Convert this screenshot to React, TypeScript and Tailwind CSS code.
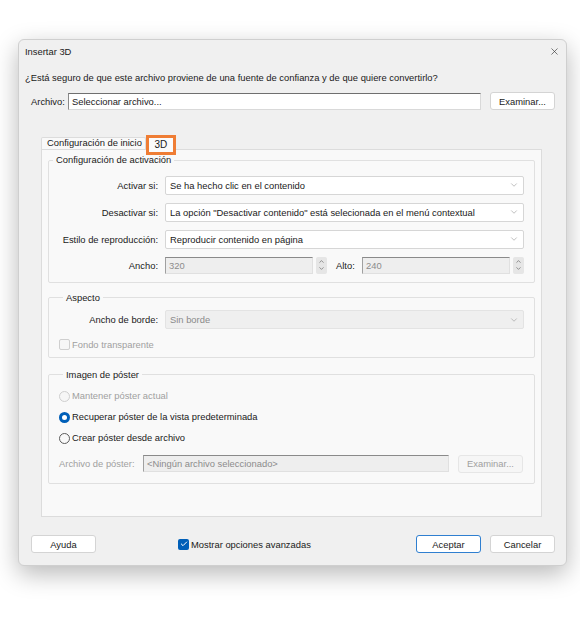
import { ChevronDown, ChevronUp, X, Check } from "lucide-react";

const font = { fontFamily: '"Liberation Sans", Arial, sans-serif' };

function Select({ value, disabled }: { value: string; disabled?: boolean }) {
  return (
    <div
      className={
        "flex h-[19px] flex-1 items-center justify-between rounded-[2px] border pl-[4px] pr-[4px] " +
        (disabled ? "border-[#e3e3e3] bg-[#efefef] text-[#8a8a8a]" : "border-[#d6d6d6] bg-white text-[#1a1a1a]")
      }
    >
      <span>{value}</span>
      <ChevronDown className="h-[10px] w-[10px] text-[#9a9a9a]" strokeWidth={1.5} />
    </div>
  );
}

function Spinner() {
  return (
    <div className="flex h-[17px] w-[11px] flex-col items-center justify-center rounded-[2px] bg-[#e6e6e6] text-[#555]">
      <ChevronUp className="h-[7px] w-[7px]" strokeWidth={2} />
      <ChevronDown className="h-[7px] w-[7px]" strokeWidth={2} />
    </div>
  );
}

function NumberField({ value }: { value: string }) {
  return (
    <div className="flex items-center gap-[3px]">
      <div className="flex h-[17px] w-[148px] items-center border border-[#e0e0e0] border-t-[#8a8a8a] border-l-[#a0a0a0] bg-[#eeeeee] pl-[3px] text-[#8c8c8c]">
        {value}
      </div>
      <Spinner />
    </div>
  );
}

function Row({ label, children }: { label: string; children: React.ReactNode }) {
  return (
    <div className="flex items-center">
      <div className="w-[116px] pr-[7px] text-right text-[#1a1a1a]">{label}</div>
      {children}
    </div>
  );
}

function Radio({ label, state }: { label: string; state: "off" | "on" | "disabled" }) {
  return (
    <div className="flex items-center gap-[2px]">
      {state === "on" ? (
        <span className="flex h-[11px] w-[11px] items-center justify-center rounded-full bg-[#005fb8]">
          <span className="h-[5px] w-[5px] rounded-full bg-white" />
        </span>
      ) : (
        <span
          className={
            "h-[11px] w-[11px] rounded-full border " +
            (state === "disabled" ? "border-[#cfcfcf] bg-[#f6f6f6]" : "border-[#5c5c5c] bg-[#f9f9f9]")
          }
        />
      )}
      <span className={state === "disabled" ? "text-[#a0a0a0]" : "text-[#1a1a1a]"}>{label}</span>
    </div>
  );
}

function Button({ children, primary, disabled, className }: { children: React.ReactNode; primary?: boolean; disabled?: boolean; className?: string }) {
  return (
    <div
      className={
        "flex h-[18px] items-center justify-center rounded-[3px] border " +
        (primary
          ? "border-[#2f7fd0] bg-white text-[#1a1a1a]"
          : disabled
          ? "border-[#e6e6e6] bg-[#f6f6f6] text-[#a0a0a0]"
          : "border-[#d4d4d4] bg-white text-[#1a1a1a]") +
        " " +
        (className ?? "")
      }
    >
      {children}
    </div>
  );
}

export default function App() {
  return (
    <div className="h-[626px] w-[580px] bg-white pl-[18px] pt-[39px] text-[9.4px] leading-none" style={font}>
      <div className="flex h-[527px] w-[549px] flex-col rounded-[6px] border border-[#cfcfcf] bg-[#f0f0f0] shadow-[0_8px_24px_rgba(0,0,0,0.28)]">
        {/* title bar */}
        <div className="flex h-[22px] items-center justify-between pl-[6px] pr-[6px] pt-[1px] text-[#1a1a1a]">
          <span>Insertar 3D</span>
          <X className="h-[11px] w-[11px] text-[#333]" strokeWidth={1.4} />
        </div>

        <div className="mt-[11px] pl-[6px] text-[#1a1a1a]">
          ¿Está seguro de que este archivo proviene de una fuente de confianza y de que quiere convertirlo?
        </div>

        <div className="mt-[10px] flex items-center pl-[12px] pr-[11px]">
          <span className="w-[37px] text-[#1a1a1a]">Archivo:</span>
          <div className="flex h-[17px] w-[413px] items-center border border-[#d9d9d9] border-t-[#6f6f6f] border-l-[#8a8a8a] bg-white pl-[3px] text-[#1a1a1a]">
            Seleccionar archivo...
          </div>
          <Button className="ml-[9px] w-[65px]">Examinar...</Button>
        </div>

        {/* tabs */}
        <div className="ml-[22px] mt-[22px] flex w-[501px] flex-col">
          <div className="flex h-[17px] items-end">
            <div className="flex h-[12px] items-start rounded-t-[2px] border border-b-0 border-[#dcdcdc] bg-[#f9f9f9] pl-[5px] pr-[3px] text-[#1a1a1a]">
              Configuración de inicio
            </div>
            <div className="relative -mb-[6px] flex h-[20px] w-[30px] items-center justify-center border-[3px] border-[#ef7d34] bg-[#fbfbfb] text-[10px] text-[#1a1a1a]">
              3D
            </div>
          </div>
          <div className="flex h-[368px] flex-col border border-[#dcdcdc] bg-[#f9f9f9] px-[6px] pt-[5px]">
            <fieldset className="rounded-[2px] border border-[#e0e0e0] pb-[8px] pl-[0px] pr-[10px]">
              <legend className="ml-[4px] px-[3px] text-[#1a1a1a]">Configuración de activación</legend>
              <div className="mt-[11px] flex flex-col gap-[8px]">
                <Row label="Activar si:">
                  <Select value="Se ha hecho clic en el contenido" />
                </Row>
                <Row label="Desactivar si:">
                  <Select value={'La opción "Desactivar contenido" está selecionada en el menú contextual'} />
                </Row>
                <Row label="Estilo de reproducción:">
                  <Select value="Reproducir contenido en página" />
                </Row>
                <Row label="Ancho:">
                  <NumberField value="320" />
                  <span className="ml-[9px] w-[26px] text-[#1a1a1a]">Alto:</span>
                  <NumberField value="240" />
                </Row>
              </div>
            </fieldset>

            <fieldset className="mt-[10px] rounded-[2px] border border-[#e0e0e0] pb-[7px] pl-[10px] pr-[10px]">
              <legend className="ml-[4px] px-[3px] text-[#1a1a1a]">Aspecto</legend>
              <div className="mt-[8px] -ml-[10px] flex items-center">
                <div className="w-[116px] pr-[7px] text-right text-[#1a1a1a]">Ancho de borde:</div>
                <Select value="Sin borde" disabled />
              </div>
              <div className="mt-[10px] flex items-center gap-[2px]">
                <span className="h-[11px] w-[11px] rounded-[2px] border border-[#cfcfcf] bg-[#f6f6f6]" />
                <span className="text-[#a0a0a0]">Fondo transparente</span>
              </div>
            </fieldset>

            <fieldset className="mt-[12px] rounded-[2px] border border-[#e0e0e0] pb-[10px] pl-[10px] pr-[10px]">
              <legend className="ml-[4px] px-[3px] text-[#1a1a1a]">Imagen de póster</legend>
              <div className="mt-[11px] flex flex-col gap-[10px]">
                <Radio label="Mantener póster actual" state="disabled" />
                <Radio label="Recuperar póster de la vista predeterminada" state="on" />
                <Radio label="Crear póster desde archivo" state="off" />
              </div>
              <div className="mt-[11px] flex items-center">
                <span className="w-[84px] text-[#a0a0a0]">Archivo de póster:</span>
                <div className="flex h-[17px] w-[306px] items-center border border-[#e0e0e0] border-t-[#8a8a8a] border-l-[#a0a0a0] bg-[#eeeeee] pl-[3px] text-[#8c8c8c]">
                  {"<Ningún archivo seleccionado>"}
                </div>
                <Button disabled className="ml-[9px] w-[65px]">Examinar...</Button>
              </div>
            </fieldset>
          </div>
        </div>

        {/* footer */}
        <div className="mt-[18px] flex items-center pl-[12px] pr-[11px]">
          <Button className="w-[65px]">Ayuda</Button>
          <div className="ml-[82px] flex items-center gap-[2px]">
            <span className="flex h-[11px] w-[11px] items-center justify-center rounded-[2px] bg-[#005fb8]">
              <Check className="h-[8px] w-[8px] text-white" strokeWidth={3} />
            </span>
            <span className="text-[#1a1a1a]">Mostrar opciones avanzadas</span>
          </div>
          <div className="ml-auto flex gap-[9px]">
            <Button primary className="w-[65px]">Aceptar</Button>
            <Button className="w-[65px]">Cancelar</Button>
          </div>
        </div>
      </div>
    </div>
  );
}
